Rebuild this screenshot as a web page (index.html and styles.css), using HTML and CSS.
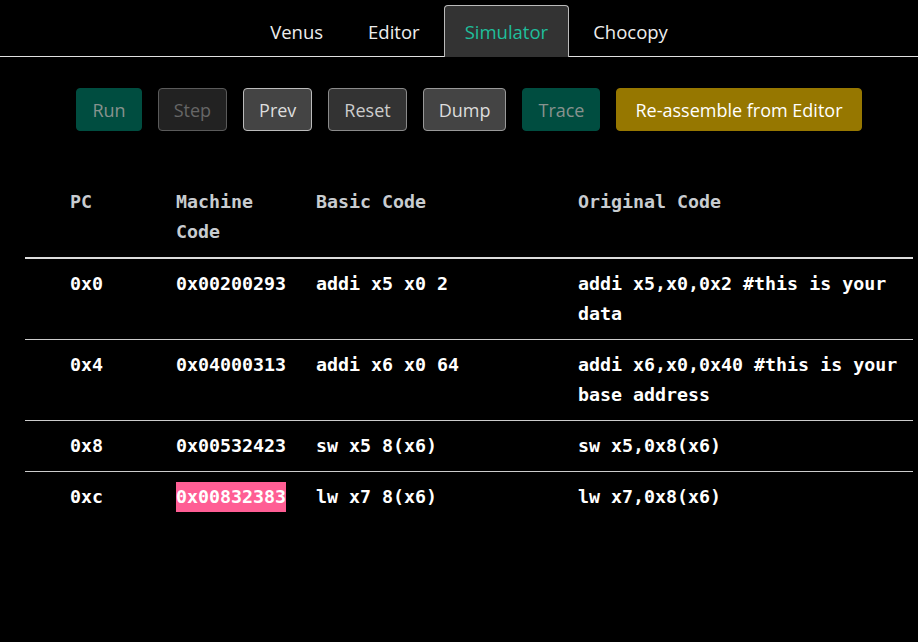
FILE: index.html
```html
<!DOCTYPE html>
<html>
<head>
<meta charset="utf-8">
<link rel="stylesheet" href="styles.css">
</head>
<body>
<nav class="tabs">
  <a class="tab">Venus</a>
  <a class="tab">Editor</a>
  <a class="tab active">Simulator</a>
  <a class="tab">Chocopy</a>
</nav>
<div class="toolbar">
  <button class="btn btn-teal">Run</button>
  <button class="btn btn-step">Step</button>
  <button class="btn btn-prev">Prev</button>
  <button class="btn btn-reset">Reset</button>
  <button class="btn btn-dump">Dump</button>
  <button class="btn btn-teal">Trace</button>
  <button class="btn btn-gold">Re-assemble from Editor</button>
</div>
<table class="code">
  <colgroup>
    <col class="c1"><col class="c2"><col class="c3"><col class="c4">
  </colgroup>
  <thead>
    <tr><th>PC</th><th>Machine Code</th><th>Basic Code</th><th>Original Code</th></tr>
  </thead>
  <tbody>
    <tr><td>0x0</td><td>0x00200293</td><td>addi x5 x0 2</td><td>addi x5,x0,0x2 #this is your data</td></tr>
    <tr><td>0x4</td><td>0x04000313</td><td>addi x6 x0 64</td><td>addi x6,x0,0x40 #this is your base address</td></tr>
    <tr><td>0x8</td><td>0x00532423</td><td>sw x5 8(x6)</td><td>sw x5,0x8(x6)</td></tr>
    <tr class="last"><td>0xc</td><td><span class="hl">0x00832383</span></td><td>lw x7 8(x6)</td><td>lw x7,0x8(x6)</td></tr>
  </tbody>
</table>
</body>
</html>
```
FILE: styles.css
```css
html, body {
  margin: 0;
  padding: 0;
  background: #000;
}
body {
  font-family: "Open Sans", "Noto Sans", sans-serif;
  color: #eee;
}
.tabs {
  display: flex;
  justify-content: center;
  align-items: flex-end;
  gap: 3px;
  padding-top: 5px;
  padding-left: 20px;
  border-bottom: 1px solid #e0e0e0;
  height: 51px;
}
.tab {
  display: flex;
  align-items: center;
  padding: 0 20px;
  font-size: 18.5px;
  color: #eee;
  border: 1px solid transparent;
  border-bottom: none;
  border-radius: 4px 4px 0 0;
  box-sizing: border-box;
  height: 52px;
  margin-bottom: -1px;
}
.tab.active {
  background: #333;
  border-color: #bbb;
  color: #1fbf9c;
}
.toolbar {
  display: flex;
  justify-content: center;
  gap: 16px;
  margin-top: 31px;
  padding-left: 20px;
}
.btn {
  font-family: "Open Sans", "Noto Sans", sans-serif;
  font-size: 18px;
  height: 43px;
  padding: 0 15px;
  border-radius: 4px;
  border: 1px solid transparent;
  box-sizing: border-box;
}
.btn-teal { background: #004d40; color: #87928e; border-color: #004d40; }
.btn-step { background: #222; color: #666; border-color: #5a5a5a; }
.btn-prev { background: #444; color: #ddd; border-color: #bbb; }
.btn-reset { background: #333; color: #ccc; border-color: #8a8a8a; }
.btn-dump { background: #444; color: #ddd; border-color: #999; }
.btn-gold { background: #967700; color: #fff; border-color: #967700; padding: 0 18px; }

.code {
  margin: 46px 0 0 25px;
  width: 888px;
  border-collapse: collapse;
  table-layout: fixed;
  font-family: "DejaVu Sans Mono", "Liberation Mono", monospace;
  font-size: 18.3px;
  line-height: 30px;
  font-weight: bold;
}
.c1 { width: 136px; }
.c2 { width: 140px; }
.c3 { width: 262px; }
.c4 { width: 350px; }
.code th {
  text-align: left;
  vertical-align: top;
  color: #c8ccd0;
  padding: 10px 15px;
  border-bottom: 2px solid #ddd;
}
.code td {
  vertical-align: top;
  color: #fff;
  padding: 10px 15px;
  border-bottom: 1px solid #ccc;
}
.code th:first-child, .code td:first-child {
  padding-left: 45px;
}
.code tr.last td { border-bottom: none; }
.hl {
  display: inline-block;
  background: #ff5e94;
  color: #fff;
}
```
